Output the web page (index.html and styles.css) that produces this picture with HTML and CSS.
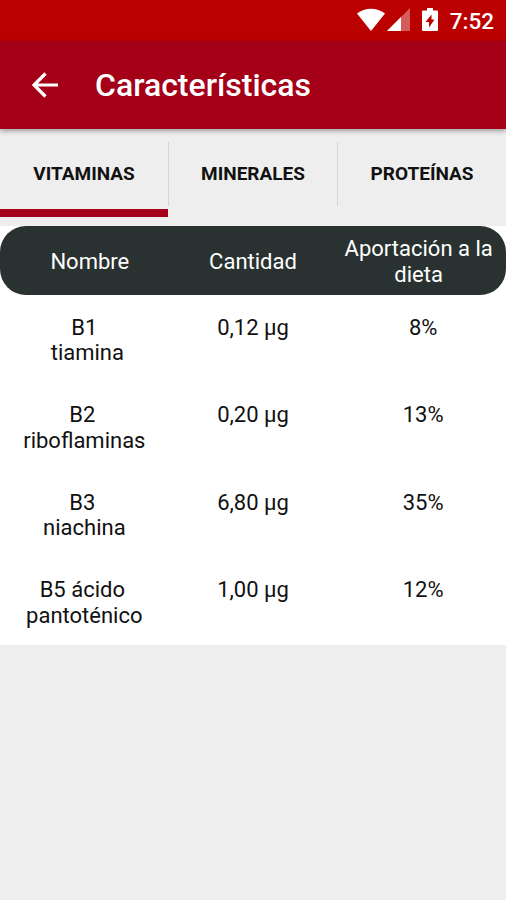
FILE: index.html
```html
<!DOCTYPE html>
<html lang="es">
<head>
<meta charset="utf-8">
<title>Características</title>
<link rel="stylesheet" href="styles.css">
</head>
<body>
<div class="status">
  <svg class="wifi" viewBox="0 0 28 23" width="28" height="23"><path d="M0 5.500C8-1 20-1 28 5.500L14 23Z" fill="#fff"/></svg>
  <svg class="signal" viewBox="0 0 23 23" width="23" height="23"><path d="M0 23L23 0V23Z" fill="#d45c5c"/><path d="M0 23L14 9V23Z" fill="#fff"/></svg>
  <svg class="battery" viewBox="0 0 16 23" width="16" height="23"><path fill-rule="evenodd" d="M5 0h6v2.500h4q1 0 1 1V22q0 1-1 1H1q-1 0-1-1V3.500q0-1 1-1h4zM9.500 6.500L3.500 14H7v5.500L12.500 11.500H9.500z" fill="#fff"/></svg>
  <span class="time">7:52</span>
</div>
<header class="bar">
  <svg class="back" viewBox="0 0 26 26" width="26" height="26"><path d="M26 13H2M13.500 1.500L2 13L13.500 24.500" fill="none" stroke="#fff" stroke-width="3.200"/></svg>
  <h1>Características</h1>
</header>
<nav class="tabs">
  <div class="tab active"><span>VITAMINAS</span></div>
  <div class="divider"></div>
  <div class="tab"><span>MINERALES</span></div>
  <div class="divider"></div>
  <div class="tab"><span>PROTEÍNAS</span></div>
</nav>
<main>
  <div class="row head"><div><span>Nombre</span></div><div><span>Cantidad</span></div><div><span>Aportación a la</span><br><span>dieta</span></div></div>
  <div class="row"><div><span>B1</span><br><span class="wide">tiamina</span></div><div><span>0,12 µg</span></div><div><span>8%</span></div></div>
  <div class="row"><div><span class="lead">B2</span><br><span>riboflaminas</span></div><div><span>0,20 µg</span></div><div><span>13%</span></div></div>
  <div class="row"><div><span class="lead">B3</span><br><span>niachina</span></div><div><span>6,80 µg</span></div><div><span>35%</span></div></div>
  <div class="row"><div><span class="lead">B5 ácido</span><br><span>pantoténico</span></div><div><span>1,00 µg</span></div><div><span>12%</span></div></div>
</main>
</body>
</html>
```
FILE: styles.css
```css
* { box-sizing: border-box; }
body { margin: 0; background: #eee; font-family: Roboto, sans-serif; color: #111; }
.status { height: 41px; background: #bb0000; display: flex; align-items: center; padding: 0 12px 2px 357px; color: #fff; }
.signal { margin-left: 2px; }
.battery { margin-left: 12px; }
.time { margin-left: auto; padding-top: 2px; font-size: 22.500px; font-weight: 500; }
.bar { height: 88px; background: #a40018; display: flex; align-items: center; padding-left: 32px; box-shadow: 0 2px 5px rgba(0,0,0,.35); position: relative; }
h1 { margin: 0 0 0 37px; color: #fff; font-size: 32px; line-height: 38px; font-weight: 500; }
.tabs { height: 97px; display: flex; }
.tab { flex: 1; display: flex; justify-content: center; padding-top: 33px; font-size: 19px; line-height: 24px; font-weight: 700; height: 88px; }
.active { border-bottom: 8px solid #a40018; }
.divider { width: 1px; height: 64px; margin-top: 13px; background: #d6d6d6; }
main { background: #fff; height: 419px; }
.row { height: 87.500px; padding-top: 19.500px; display: grid; grid-template-columns: repeat(3, 1fr); text-align: center; font-size: 22px; line-height: 25.500px; }
.row div:last-child { padding-left: 3px; }
.wide { padding-left: 6px; }
.lead { padding-right: 4px; }
.head { height: 69px; background: #293230; color: #fff; border-radius: 26px; align-items: center; padding: 2px 0 0; }
.head div:first-child { padding-left: 11px; }
.head div:last-child { padding: 0 6px 0 0; white-space: nowrap; }
```
